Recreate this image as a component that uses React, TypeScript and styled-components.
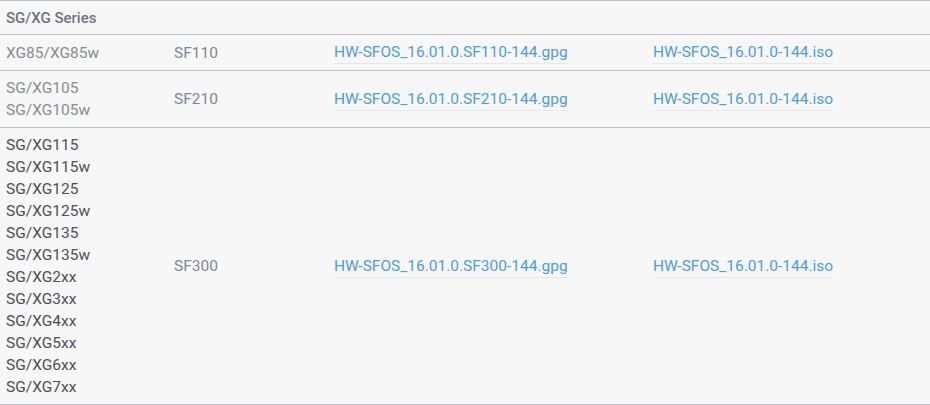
import React from "react";
import styled, { createGlobalStyle } from "styled-components";

const Global = createGlobalStyle`
  html, body { margin: 0; padding: 0; background: #f7f7f7; }
  body { font-family: Roboto, "Liberation Sans", sans-serif; }
`;

const Table = styled.table`
  width: 930px;
  border-collapse: collapse;
  table-layout: fixed;
  background: #f7f7f7;
  font-size: 15.5px;
  line-height: 22px;
  border-top: 1px solid #bcc2c2;
`;

const Row = styled.tr`
  border-bottom: 1px solid #bcc2c2;
`;

const HeadCell = styled.th`
  text-align: left;
  font-weight: 500;
  font-size: 15px;
  color: #6c7480;
  padding: 6px 6px 5px;
`;

const Cell = styled.td<{ $tone?: "light" | "dark" | "mid" }>`
  padding: 6px 6px;
  vertical-align: middle;
  color: ${(p) =>
    p.$tone === "dark" ? "#4b5056" : p.$tone === "mid" ? "#7d8896" : "#868c93"};
`;

const Link = styled.a`
  color: #4d9de0;
  text-decoration: none;
  border-bottom: 1px solid #e6e9ec;
  display: inline-block;
  line-height: 21px;
`;

const Line = styled.div``;

type Entry = { models: string[]; fw: string; gpg: string; iso: string; dark?: boolean };

const rows: Entry[] = [
  { models: ["XG85/XG85w"], fw: "SF110", gpg: "HW-SFOS_16.01.0.SF110-144.gpg", iso: "HW-SFOS_16.01.0-144.iso" },
  { models: ["SG/XG105", "SG/XG105w"], fw: "SF210", gpg: "HW-SFOS_16.01.0.SF210-144.gpg", iso: "HW-SFOS_16.01.0-144.iso" },
  {
    models: [
      "SG/XG115", "SG/XG115w", "SG/XG125", "SG/XG125w", "SG/XG135", "SG/XG135w",
      "SG/XG2xx", "SG/XG3xx", "SG/XG4xx", "SG/XG5xx", "SG/XG6xx", "SG/XG7xx",
    ],
    fw: "SF300",
    gpg: "HW-SFOS_16.01.0.SF300-144.gpg",
    iso: "HW-SFOS_16.01.0-144.iso",
    dark: true,
  },
];

export default function App() {
  return (
    <>
      <Global />
      <Table>
        <colgroup>
          <col style={{ width: 168 }} />
          <col style={{ width: 160 }} />
          <col style={{ width: 319 }} />
          <col />
        </colgroup>
        <thead>
          <Row>
            <HeadCell colSpan={4}>SG/XG Series</HeadCell>
          </Row>
        </thead>
        <tbody>
          {rows.map((r) => (
            <Row key={r.fw}>
              <Cell $tone={r.dark ? "dark" : "light"}>
                {r.models.map((m) => (
                  <Line key={m}>{m}</Line>
                ))}
              </Cell>
              <Cell $tone="mid">{r.fw}</Cell>
              <Cell>
                <Link href="#">{r.gpg}</Link>
              </Cell>
              <Cell>
                <Link href="#">{r.iso}</Link>
              </Cell>
            </Row>
          ))}
        </tbody>
      </Table>
    </>
  );
}
